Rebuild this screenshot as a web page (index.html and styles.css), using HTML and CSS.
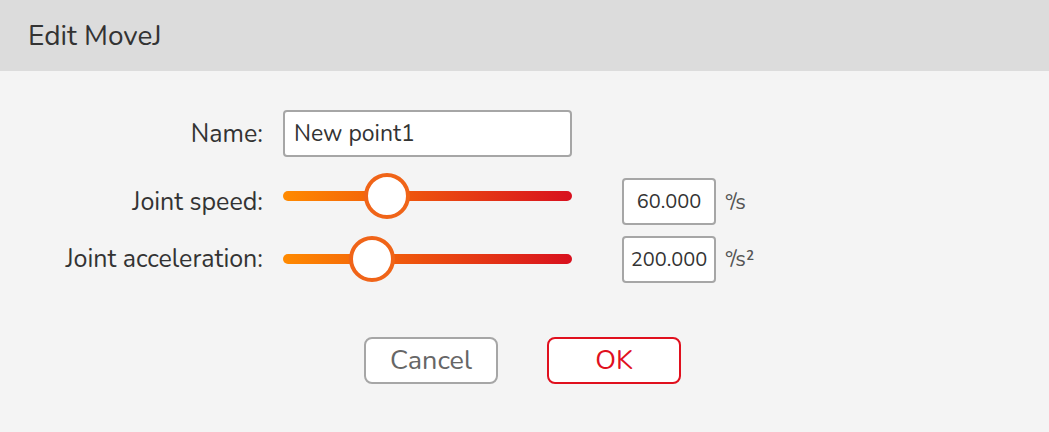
FILE: index.html
```html
<!DOCTYPE html>
<html lang="en">
<head>
  <meta charset="UTF-8">
  <title>Edit MoveJ</title>
  <link rel="stylesheet" href="styles.css">
</head>
<body>

  <header class="dialog-header">
    <h1>Edit MoveJ</h1>
  </header>

  <main class="dialog-body">
    <div class="form-grid">
      <label class="field-label" for="name">Name:</label>
      <input class="text-input" id="name" type="text" value="New point1">
      <span></span>
      <span></span>

      <label class="field-label row-gap" for="speed">Joint speed:</label>
      <input class="slider row-gap" id="speed" type="range" min="0" max="180" value="60">
      <input class="value-box row-gap" type="text" value="60.000">
      <span class="unit row-gap">°/s</span>

      <label class="field-label" for="accel">Joint acceleration:</label>
      <input class="slider" id="accel" type="range" min="0" max="740" value="200">
      <input class="value-box" type="text" value="200.000">
      <span class="unit">°/s²</span>
    </div>

    <div class="btn-group">
      <button class="btn btn-cancel">Cancel</button>
      <button class="btn btn-ok">OK</button>
    </div>
  </main>

</body>
</html>
```

FILE: styles.css
```css
:root {
  --bg: #f4f4f4;
  --header-bg: #dcdcdc;
  --text: #333;
  --border: #a6a6a6;
  --orange: #ff8a00;
  --red: #d8101e;
  --thumb: #f06418;
  --font: 'Nunito', Lato, 'Noto Sans', sans-serif;
}

body {
  margin: 0;
  font-family: var(--font);
  background-color: var(--bg);
  color: var(--text);
}

.dialog-header {
  background-color: var(--header-bg);
  height: 71px;
  padding: 0 28px;
  display: flex;
  align-items: center;
}

.dialog-header h1 {
  margin: 0;
  font-size: 28px;
  font-weight: 400;
}

.dialog-body {
  padding-top: 39px;
}

.form-grid {
  display: grid;
  grid-template-columns: 263px 289px 124px auto;
  column-gap: 20px;
  row-gap: 10px;
  align-items: center;
}

.form-grid .value-box {
  justify-self: end;
}

.row-gap {
  margin-top: 11px;
}

.field-label {
  text-align: right;
  font-size: 25px;
}

.text-input {
  box-sizing: border-box;
  height: 47px;
  border: 2px solid var(--border);
  border-radius: 4px;
  background: #fff;
  padding: 0 9px;
  font-family: var(--font);
  font-size: 23px;
  color: var(--text);
}

.value-box {
  box-sizing: border-box;
  width: 94px;
  height: 47px;
  border: 2px solid var(--border);
  border-radius: 4px;
  background: #fff;
  text-align: center;
  font-family: var(--font);
  font-size: 20px;
  color: var(--text);
  padding: 0;
}

.unit {
  font-size: 22px;
  color: #555;
  margin-left: -11px;
}

.slider {
  -webkit-appearance: none;
  appearance: none;
  width: 289px;
  height: 48px;
  margin: 0;
  background: transparent;
}

.slider::-webkit-slider-runnable-track {
  height: 10px;
  border-radius: 5px;
  background: linear-gradient(to right, var(--orange), var(--red));
}

.slider::-webkit-slider-thumb {
  -webkit-appearance: none;
  box-sizing: border-box;
  width: 46px;
  height: 46px;
  margin-top: -18px;
  border-radius: 50%;
  background: #fff;
  border: 4px solid var(--thumb);
}

.btn-group {
  display: flex;
  justify-content: center;
  gap: 49px;
  margin-top: 54px;
  padding-right: 4px;
}

.btn {
  box-sizing: border-box;
  width: 134px;
  height: 47px;
  border-radius: 8px;
  background: #fff;
  font-family: var(--font);
  font-size: 27px;
  padding: 0;
}

.btn-cancel {
  border: 2px solid var(--border);
  color: #666;
}

.btn-ok {
  border: 2px solid #e0101e;
  color: #e0101e;
}
```
